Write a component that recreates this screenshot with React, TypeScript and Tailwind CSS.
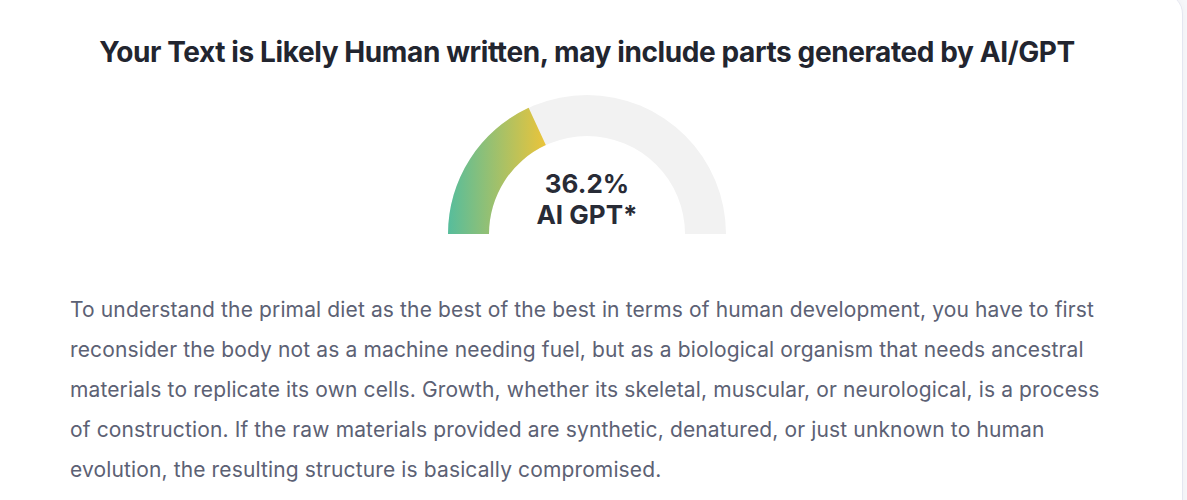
import React from "react";

const CX = 140;
const CY = 140;
const R_OUT = 139;
const R_IN = 98;

function pt(r: number, deg: number) {
  const a = (deg * Math.PI) / 180;
  return [CX - r * Math.cos(a), CY - r * Math.sin(a)];
}

// Annulus segment measured from the left end of the half circle (0deg) clockwise.
function arc(from: number, to: number) {
  const [x0, y0] = pt(R_OUT, from);
  const [x1, y1] = pt(R_OUT, to);
  const [x2, y2] = pt(R_IN, to);
  const [x3, y3] = pt(R_IN, from);
  const large = to - from > 180 ? 1 : 0;
  return `M${x0} ${y0} A${R_OUT} ${R_OUT} 0 ${large} 1 ${x1} ${y1} L${x2} ${y2} A${R_IN} ${R_IN} 0 ${large} 0 ${x3} ${y3} Z`;
}

function Gauge({ value }: { value: number }) {
  const end = (value / 100) * 180;
  return (
    <div className="relative w-[280px] h-[140px]">
      <svg width="280" height="140" viewBox="0 0 280 140" className="block">
        <defs>
          <linearGradient id="score" x1="1" y1="0" x2="97" y2="0" gradientUnits="userSpaceOnUse">
            <stop offset="0" stopColor="#56bd9c" />
            <stop offset="1" stopColor="#e8c43c" />
          </linearGradient>
        </defs>
        <path d={arc(0, 180)} fill="#f2f2f2" />
        <path d={arc(0, end)} fill="url(#score)" />
      </svg>
      <div className="absolute left-0 right-0 bottom-[4px] flex flex-col items-center text-[#282b36] font-bold text-[26px] leading-[31px]">
        <span>{value}%</span>
        <span>AI GPT*</span>
      </div>
    </div>
  );
}

export default function App() {
  return (
    <div className="w-[1187px] h-[500px] overflow-hidden bg-[#f7f7fa]" style={{ fontFamily: "Inter, 'Noto Sans', sans-serif" }}>
      <div className="mt-[-6px] mr-[4px] h-[520px] bg-white rounded-tr-[20px] border-r-[1.5px] border-[#e4e6f0] shadow-[0_-2px_10px_rgba(0,0,0,0.03)]">
        <div className="pt-[40px] pr-[8px] flex flex-col items-center">
          <h1 className="text-[28px] leading-[36px] font-bold text-[#22252f] tracking-[-0.4px]">
            Your Text is Likely Human written, may include parts generated by AI/GPT
          </h1>
          <div className="mt-[24px]">
            <Gauge value={36.2} />
          </div>
        </div>
        <p className="mt-[56px] pl-[70px] pr-[80px] text-[21px] leading-[40px] text-[#5c6174] tracking-[0.13px]">
          To understand the primal diet as the best of the best in terms of human development, you have to first reconsider the body not as a machine needing fuel, but as a biological organism that needs ancestral materials to replicate its own cells. Growth, whether its skeletal, muscular, or neurological, is a process of construction. If the raw materials provided are synthetic, denatured, or just unknown to human evolution, the resulting structure is basically compromised.
        </p>
      </div>
    </div>
  );
}
